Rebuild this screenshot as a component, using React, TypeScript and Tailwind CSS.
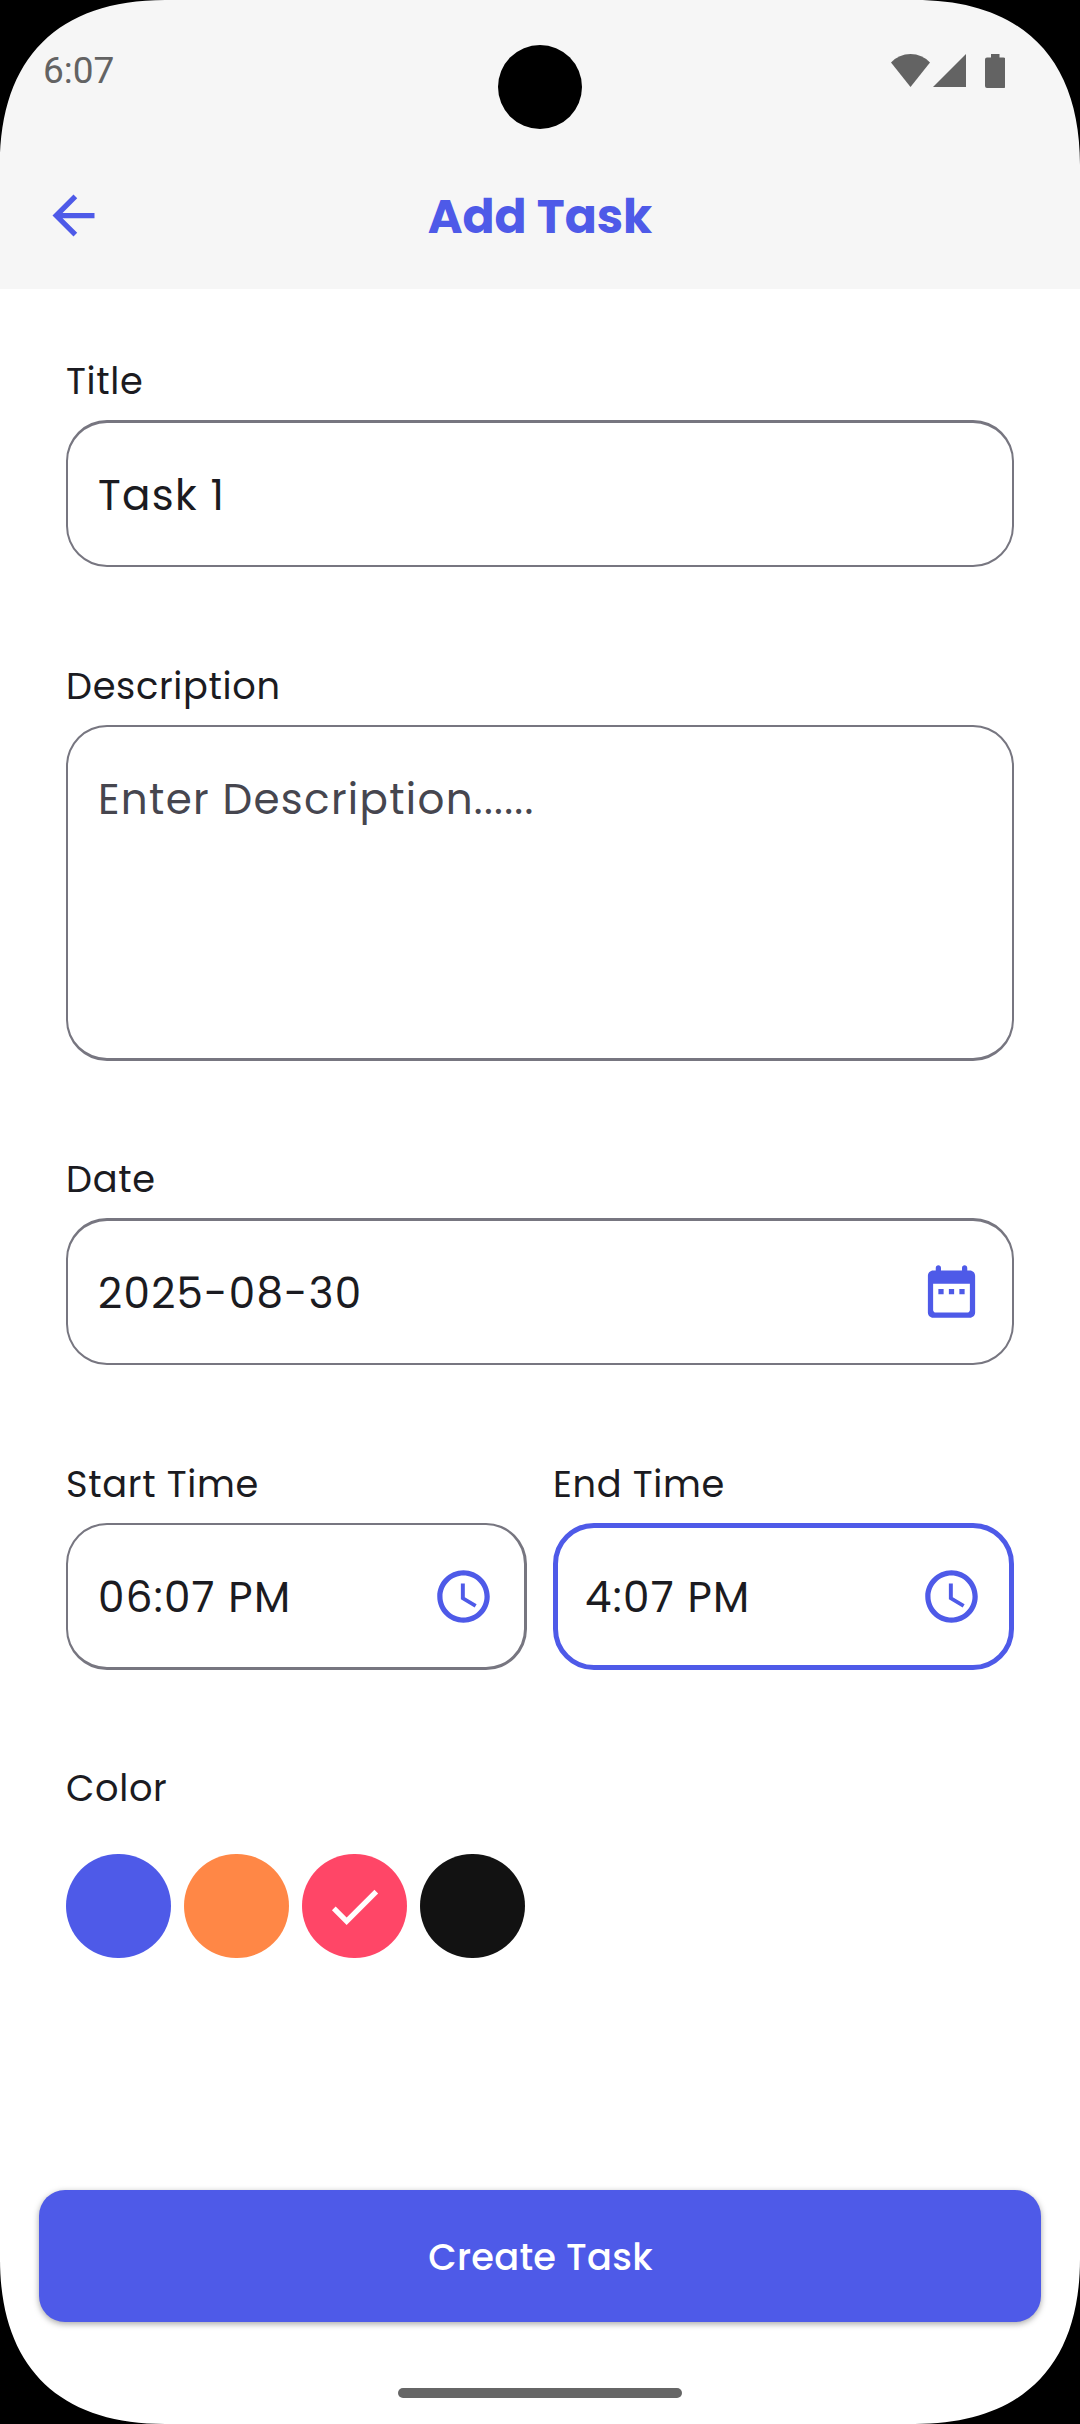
import type { ReactNode } from "react";

function ScreenCorner({ className }: { className: string }) {
  return (
    <svg viewBox="0 0 165 165" className={`absolute h-[165px] w-[165px] ${className}`} fill="#000">
      <path d="M0 0H165C58 0 0 58 0 165Z" />
    </svg>
  );
}

function CalendarIcon() {
  return (
    <svg viewBox="0 0 24 24" className="mb-px h-[63px] w-[63px] shrink-0" fill="#4e5ae8">
      <path d="M9 11H7v2h2v-2zm4 0h-2v2h2v-2zm4 0h-2v2h2v-2zm2-7h-1V3c0-.55-.45-1-1-1s-1 .45-1 1v1H8V3c0-.55-.45-1-1-1s-1 .45-1 1v1H5c-1.11 0-1.99.9-1.99 2L3 20c0 1.1.89 2 2 2h14c1.1 0 2-.9 2-2V6c0-1.1-.9-2-2-2zm0 15c0 .55-.45 1-1 1H6c-.55 0-1-.45-1-1V9h14v10z" />
    </svg>
  );
}

function ClockIcon() {
  return (
    <svg viewBox="0 0 24 24" className="h-[63px] w-[63px] shrink-0" fill="#4e5ae8">
      <path d="M11.99 2C6.47 2 2 6.48 2 12s4.47 10 9.99 10C17.52 22 22 17.52 22 12S17.52 2 11.99 2zM12 20c-4.42 0-8-3.58-8-8s3.58-8 8-8 8 3.58 8 8-3.58 8-8 8z" />
      <path d="M12.5 7H11v6l5.25 3.15.75-1.23-4.5-2.67z" />
    </svg>
  );
}

function Label({ children }: { children: ReactNode }) {
  return <span className="self-start text-[36.75px] leading-[56px] tracking-[0.66px]">{children}</span>;
}

function Field({
  label,
  value,
  boxClass,
  placeholder = false,
  icon,
}: {
  label: string;
  value: string;
  boxClass: string;
  placeholder?: boolean;
  icon?: ReactNode;
}) {
  return (
    <div className="flex flex-col">
      <Label>{label}</Label>
      <div className={`mt-[11px] flex justify-between rounded-[41px] ${boxClass}`}>
        <span
          className={`pt-[2px] text-[42px] leading-[63px] tracking-[1.31px] ${placeholder ? "text-[#46464f]" : ""}`}
        >
          {value}
        </span>
        {icon}
      </div>
    </div>
  );
}

export default function App() {
  return (
    <div className="relative flex h-[2424px] w-[1080px] flex-col overflow-hidden bg-white font-[Poppins,Inter,sans-serif] text-[#1b1b21] [font-feature-settings:'cv11']">
      <header className="h-[289px] bg-[#f6f6f6]">
        <div className="flex h-[142px] items-center justify-between pr-[75px] pl-[43px]">
          <span className="mb-px font-[Roboto,sans-serif] text-[37px] leading-[44px] text-[#636363]">6:07</span>
          <svg viewBox="0 0 114 34" className="h-[34px] w-[114px]" fill="#636363">
            <path d="M0 8.500Q8 0 19.500 0T39 8.500L19.500 33Z" />
            <path d="M75 0V33H42Z" />
            <path d="M100 0h8.500v3.500h4a2 2 0 0 1 2 2V32a2 2 0 0 1-2 2H96a2 2 0 0 1-2-2V5.500a2 2 0 0 1 2-2h4z" />
          </svg>
        </div>
        <div className="flex h-[147px] items-center justify-between px-[42px]">
          <svg viewBox="0 0 24 24" className="h-[63px] w-[63px]" fill="#4e5ae8">
            <path d="M20 11H7.830l5.590-5.590L12 4l-8 8 8 8 1.410-1.410L7.830 13H20v-2z" />
          </svg>
          <h1 className="pt-[2px] text-[47.25px] leading-[63px] font-bold text-[#4e5ae8]">Add Task</h1>
          <div className="w-[63px]" />
        </div>
      </header>

      <main className="flex flex-1 flex-col px-[66px] pt-16">
        <Field
          label="Title"
          value="Task 1"
          boxClass="h-[147px] items-center border-2 border-t-3 border-[#777680] pl-[30px]"
        />
        <div className="mt-[91px]">
          <Field
            label="Description"
            value="Enter Description......"
            placeholder
            boxClass="h-[336px] items-start border-2 border-b-3 border-[#777680] pt-[39px] pl-[30px]"
          />
        </div>
        <div className="mt-[90px]">
          <Field
            label="Date"
            value="2025-08-30"
            boxClass="h-[147px] items-center border-2 border-t-3 border-[#777680] pr-[29px] pl-[30px]"
            icon={<CalendarIcon />}
          />
        </div>
        <div className="mt-[91px] grid grid-cols-2 gap-[26px]">
          <Field
            label="Start Time"
            value="06:07 PM"
            boxClass="h-[147px] items-center border-2 border-r-3 border-b-3 border-[#777680] pr-[29px] pl-[30px]"
            icon={<ClockIcon />}
          />
          <Field
            label="End Time"
            value="4:07 PM"
            boxClass="h-[147px] items-center border-5 border-[#4e5ae8] pr-[26px] pl-[27px]"
            icon={<ClockIcon />}
          />
        </div>
        <div className="mt-[90px] flex flex-col">
          <Label>Color</Label>
        </div>
        <div className="mt-[38px] flex gap-[13px]">
          <div className="h-[104px] w-[105px] rounded-full bg-[#4e5ae8]" />
          <div className="h-[104px] w-[105px] rounded-full bg-[#ff8746]" />
          <div className="flex h-[104px] w-[105px] items-center justify-center rounded-full bg-[#ff4667]">
            <svg viewBox="0 0 24 24" className="h-[63px] w-[63px]" fill="#fff">
              <path d="M9 16.170L4.830 12l-1.420 1.410L9 19 21 7l-1.410-1.410z" />
            </svg>
          </div>
          <div className="h-[104px] w-[105px] rounded-full bg-[#121212]" />
        </div>
      </main>

      <footer className="flex h-[234px] flex-col items-center">
        <button className="h-[132px] w-[1002px] rounded-[26px] bg-[#4e5ae8] pt-[2px] pl-px text-[36.75px] leading-[56px] font-medium tracking-[0.26px] text-white shadow-[0_2px_6px_rgba(0,0,0,0.35)]">
          Create Task
        </button>
        <div className="mt-[66px] h-[10px] w-[284px] rounded-full bg-[#666666]" />
      </footer>

      <div className="absolute top-[44.5px] left-[497.5px] h-[84px] w-[84px] rounded-full bg-black" />
      <ScreenCorner className="top-0 left-0" />
      <ScreenCorner className="top-0 right-0 rotate-90" />
      <ScreenCorner className="right-0 bottom-0 rotate-180" />
      <ScreenCorner className="bottom-0 left-0 -rotate-90" />
    </div>
  );
}
